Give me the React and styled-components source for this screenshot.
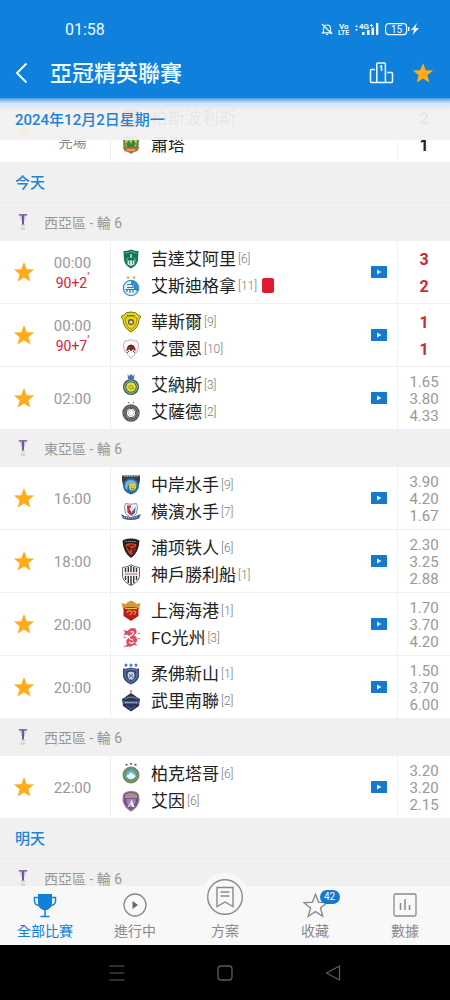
import React from "react";
import styled, { createGlobalStyle, css } from "styled-components";

const BLUE = "#0f80dc";

const GlobalStyle = createGlobalStyle`
  *, *::before, *::after { box-sizing: border-box; }
  body {
    margin: 0;
    background: #f0f0f0;
    font-family: Roboto, "Noto Sans CJK TC", sans-serif;
  }
  button { border: 0; padding: 0; background: none; font: inherit; color: inherit; cursor: pointer; }
  svg { display: block; }
  ul { list-style: none; margin: 0; padding: 0; }
  h1, h2, h3 { margin: 0; font-weight: 500; }
`;

const Screen = styled.div`
  display: flex;
  flex-direction: column;
  height: 100vh;
`;

const Header = styled.header`
  flex: none;
  background: ${BLUE};
  color: #effaff;
`;

const StatusBar = styled.div`
  display: flex;
  align-items: center;
  justify-content: space-between;
  height: 48px;
  padding: 10px 28px 0 65px;
  font-size: 16px;
`;

const StatusIcons = styled.div`
  display: flex;
  align-items: center;
`;

const TitleBar = styled.div`
  display: flex;
  align-items: center;
  height: 50px;
  padding: 0 16px 0 14px;
`;

const Title = styled.h1`
  flex: 1;
  padding: 2px 0 0 21px;
  font-size: 22px;
  line-height: 30px;
`;

const IconButton = styled.button`
  display: flex;
  align-items: center;
  justify-content: center;
`;

const Actions = styled.div`
  display: flex;
  align-items: center;
  gap: 18px;
`;

const Feed = styled.main`
  position: relative;
  flex: 1;
  min-height: 0;
  padding-top: 2px;
  overflow: hidden;
`;

const StickyDate = styled.h2`
  position: absolute;
  inset: 0 0 auto 0;
  z-index: 1;
  height: 42px;
  padding-left: 15px;
  line-height: 44px;
  font-size: 15px;
  color: #1f82d2;
  background:
    linear-gradient(rgba(15, 128, 220, 0.75), rgba(190, 222, 250, 0.7) 5px, rgba(240, 240, 240, 0) 13px),
    rgba(241, 241, 241, 0.95);
`;

const DayTitle = styled.h2`
  height: 41px;
  padding-left: 15px;
  line-height: 42px;
  font-size: 15px;
  color: #1f82d2;
  border-bottom: 1px solid #e9e9e9;
`;

const RoundTitle = styled.h3`
  display: flex;
  align-items: center;
  gap: 14px;
  height: 38px;
  padding-left: 16px;
  font-size: 14px;
  font-weight: 400;
  color: #999;
`;

const MatchRow = styled.li`
  display: grid;
  grid-template-columns: 48px 62px 1fr 53px;
  align-items: stretch;
  min-height: 62px;
`;

const MatchList = styled.ul`
  background: #fff;
  ${MatchRow} + ${MatchRow} {
    min-height: 63px;
    border-top: 1px solid #efefef;
  }
`;

const Kickoff = styled.div`
  display: flex;
  flex-direction: column;
  align-items: center;
  justify-content: center;
  padding: 2px 13px 0 0;
  font-size: 15px;
  line-height: 20px;
  color: #999;
`;

const KickoffTime = styled.span`
  min-height: 20px;
`;

const Phase = styled.span`
  font-size: 14px;
  color: ${(p) => (p.$live ? "#d32340" : "#888")};
  sup { font-size: 12px; line-height: 0; }
`;

const Fixture = styled.div`
  display: flex;
  align-items: center;
  justify-content: space-between;
  padding-right: 10px;
  padding-left: 10px;
  border-left: 1px solid #f0f0f0;
`;

const Team = styled.div`
  display: flex;
  align-items: center;
  height: 27px;
  font-size: 17px;
  line-height: 25px;
  color: #222;
  white-space: nowrap;
`;

const TeamName = styled.span`
  padding: 2px 0 0 10px;
`;

const Rank = styled.small`
  padding: 1px 0 0 2px;
  font-size: 12px;
  font-weight: 300;
  color: #777;
`;

const RedCard = styled.span`
  width: 12px;
  height: 15px;
  margin-left: 5px;
  border-radius: 2px;
  background: #e21a30;
`;

const Result = styled.div`
  display: flex;
  flex-direction: column;
  align-items: center;
  justify-content: center;
  padding-top: 2px;
  border-left: 1px solid #f3f3f3;
  ${(p) =>
    p.$odds
      ? css`
          font-size: 15px;
          line-height: 17px;
          color: #999;
        `
      : css`
          font-size: 16px;
          font-weight: 700;
          line-height: 27px;
          color: ${p.$live ? "#cb2637" : "#222"};
        `}
`;

const TabBar = styled.nav`
  position: relative;
  z-index: 2;
  flex: none;
  display: flex;
  height: 59px;
  background: #f8f8f8;
`;

const Tab = styled.a`
  flex: 1;
  display: flex;
  flex-direction: column;
  align-items: center;
  justify-content: flex-end;
  padding-bottom: 3px;
  font-size: 14px;
  line-height: 21px;
  text-decoration: none;
  color: ${(p) => (p.$active ? BLUE : "#8a8a8a")};
`;

const TabIcon = styled.span`
  position: relative;
  display: flex;
  align-items: center;
  justify-content: center;
  height: 32px;
`;

const RaisedIcon = styled.span`
  flex: none;
  display: flex;
  align-items: center;
  justify-content: center;
  width: 48px;
  height: 48px;
  border-radius: 50%;
  background: #f8f8f8;
`;

const Badge = styled.span`
  position: absolute;
  top: 1px;
  left: 17px;
  width: 20px;
  border-radius: 8px;
  background: #1478cc;
  color: #fff;
  font-size: 10px;
  line-height: 14px;
  text-align: center;
`;

const SystemBar = styled.div`
  flex: none;
  display: flex;
  align-items: center;
  justify-content: center;
  gap: 84px;
  height: 55px;
  background: #000;
  color: #5c5c5c;
`;

function StarIcon({ size = 22, outline }) {
  return (
    <svg width={size} height={size} viewBox="0 0 24 24" aria-hidden="true">
      <path
        d="M12 1.2 15 8.900l8 .4-6.200 5.100 2.100 8L12 17.900 5.100 22.400l2.100-8L1 9.300l8-.4z"
        fill={outline ? "none" : "#ffab1a"}
        stroke={outline ? "currentColor" : "none"}
        strokeWidth="1.3"
      />
    </svg>
  );
}

function PlayIcon() {
  return (
    <svg width="16" height="12" viewBox="0 0 16 12" aria-hidden="true">
      <rect width="16" height="12" rx="0.5" fill="#1679cd" />
      <path d="M6 3.500 10.500 6 6 8.500z" fill="#e8f4ff" />
    </svg>
  );
}

function CupIcon() {
  return (
    <svg width="14" height="20" viewBox="0 0 14 20" aria-hidden="true">
      <path d="M3.500 3 5.200 8.500 7 10l1.800-1.500L10.500 3z" fill="#cfc4dc" />
      <path d="M2.800 2.800h8.400" stroke="#8672a0" strokeWidth="1.600" />
      <path d="M7 3v9.500" stroke="#6f5290" strokeWidth="1.900" />
      <path d="M5 13h4" stroke="#a7a0b0" strokeWidth=".8" />
      <ellipse cx="7" cy="16.500" rx="2.800" ry="1.600" fill="#d6d6d8" />
    </svg>
  );
}

const SHIELD = "M2 3Q6 3 10 1.200 14 3 18 3v8q0 6-8 10Q2 17 2 11z";

const crests = {
  persepolis: <path d={SHIELD} fill="#b92b2b" />,
  sepahan: (
    <>
      <path d="M2 5 5 2h10l3 3-.500 9L10 20l-7.500-6z" fill="#6a8c3c" />
      <path d="M4 5h12l-1 7H5z" fill="#b8d27a" />
      <path d="m5 10 3-4 2 4 2-5 3 5-3 3H7z" fill="#3f7f36" />
      <path d="m1.500 13 4 1h9l4-1-2 4-6.500 2-6.500-2z" fill="#bd6a35" />
      <path d="M6 16h8" stroke="#f4e2a0" />
    </>
  ),
  ahli: (
    <>
      <path d="M2.500 3q4 0 7.500-1.500Q13.500 3 17.500 3L17 12q-.500 5-7 8.500-6.500-3.500-7-8.500z" fill="#147457" />
      <path d="M4 5q3 0 6-1.500M16 5q-3 0-6-1.500" stroke="#5fae91" fill="none" />
      <path d="M9 6h2v4H9z" fill="#8fc9b3" />
      <path d="M5.500 13q0-3 2-3.500M14.500 13q0-3-2-3.500" stroke="#6fb79d" fill="none" />
      <path d="M6.500 12.500h7v4L10 18l-3.500-1.500z" fill="#dcf1e9" />
      <path d="M8.500 12.500v4M11.500 12.500v4" stroke="#147457" strokeWidth=".8" />
    </>
  ),
  esteghlal: (
    <>
      <path d="m7 .5.600 1.200 1.400.1-1 1 .2 1.200-1.200-.6-1.200.6.2-1.200-1-1 1.400-.1zM13 .5l.6 1.200 1.400.1-1 1 .2 1.200-1.200-.6-1.200.6.2-1.200-1-1 1.400-.1z" fill="#d9b65b" />
      <circle cx="10" cy="13" r="7.600" fill="#e5f3fb" stroke="#3c8fc4" strokeWidth="1.300" />
      <path d="M10 5.400a7.600 7.600 0 0 1 6.600 11.400L13 14V9h-3z" fill="#2b8fd0" />
      <path d="M6 9.500h6v3H6M4.500 14.500h11M6 17v-2M9 18v-3M12 17.500v-3" stroke="#3178b4" strokeWidth="1.200" fill="none" />
    </>
  ),
  wasl: (
    <>
      <path d="M0 5.500 3 4q1.500-3 7-3t7 3l3 1.500-2 3q0 8-8 12.500Q2 16.500 2 8.500z" fill="#e7d51e" stroke="#77700f" strokeWidth="1" />
      <path d="M4 7q6-4 12 0l-1 6q-2 4-5 5.500Q7 17 5 13z" fill="none" stroke="#857f18" strokeWidth=".8" />
      <circle cx="10" cy="11" r="3" fill="#5c5a34" />
      <path d="M8.500 10.500q1.500-2 3 0v2h-3z" fill="#e4e4d4" />
      <path d="M6 4.500h8" stroke="#4a470c" strokeDasharray="1 .6" />
    </>
  ),
  rayyan: (
    <>
      <path d="M4 3q3 .5 6-1.500Q13 3.500 16 3l1.500 4Q18 14 10 20 2 14 2.500 7z" fill="#fcfaf8" stroke="#b9aaa5" strokeWidth=".9" />
      <path d="M5.500 13.500q-.5-6 4.500-7 5 1 4.500 7L12 11.500H8z" fill="#a2262d" />
      <path d="M7 8.500q3-2 6 0" stroke="#302423" fill="none" />
      <circle cx="10" cy="11.500" r="1.400" fill="#40312c" />
      <path d="m6 15 2-2M14 15l-2-2" stroke="#60302c" />
    </>
  ),
  nassr: (
    <>
      <path d="m6.500 0 1.500 2L10 0l2 2 1.500-2-.5 5H7z" fill="#4b74b8" />
      <circle cx="10" cy="13" r="8" fill="#256173" />
      <circle cx="10" cy="13" r="6.200" fill="#2a5a58" stroke="#c9c851" strokeWidth="1" />
      <circle cx="10" cy="13" r="4.800" fill="#e3da35" />
      <path d="M7.500 13.500q1-3 3-1.500t2 2q-2 1.500-4 .5" stroke="#7f8f2d" fill="none" />
    </>
  ),
  sadd: (
    <>
      <circle cx="7.500" cy="1.600" r=".8" fill="#777" />
      <circle cx="12.500" cy="1.600" r=".8" fill="#777" />
      <circle cx="10" cy="12" r="7" fill="none" stroke="#555" strokeWidth="3.400" />
      <circle cx="10" cy="12" r="7" fill="none" stroke="#aaa" strokeWidth=".8" strokeDasharray="1.500 1" />
      <circle cx="10" cy="12" r="4.700" fill="#f5f5f5" stroke="#444" />
      <path d="m8 10 2-1.500 2 1.500.5 3-2.500 2-2.500-2z" fill="#fff" stroke="#aaa" strokeWidth=".6" />
    </>
  ),
  mariners: (
    <>
      <path d="M1 1.500h18v5L17.500 13Q16 18 10 20.500 4 18 2.500 13L1 6.500z" fill="#364047" />
      <path d="M3 2.500h14" stroke="#95a0a4" strokeDasharray="1.500 1" />
      <circle cx="10" cy="12" r="7.800" fill="#2a6cab" />
      <path d="M4 14Q3 6 10 6q6 .5 5.500 6-1 5-6 4.500 3-1 2-3.500T8.500 11Q6 11 6.500 16z" fill="#7fb3cf" />
      <path d="M8 13q0-3.500 3.500-3.500t3.500 3.500q-.5 3-3.500 3.500T8 13z" fill="#e6d334" />
      <path d="M10 12.500h1M12.500 12.500h1M10 14.500q1.500 1 3 0" stroke="#4b5a2c" strokeWidth=".8" fill="none" />
    </>
  ),
  marinos: (
    <>
      <path d="M4.500 2.500q5.500 1.500 11 0l1 3-1 7-5.500 5-5.500-5-1-7z" fill="#f3f1f1" stroke="#8a929c" />
      <path d="M6 4.500h4v10l-3.500-3z" fill="#b93440" />
      <path d="m10 12 4.500-6-.5 6-4 3z" fill="#3e69a3" />
      <circle cx="10.500" cy="8" r="2" fill="#e8dde0" />
      <path d="M0 13q5 3.500 10 3t10-3l-2 4.500q-8 3-16 0z" fill="#445b8b" />
      <path d="M3 16q7 2 14 0" stroke="#c9d2e4" strokeDasharray="1.200 .8" fill="none" />
    </>
  ),
  pohang: (
    <>
      <path d="M1.500 3.500Q6 1 10 1.500q4-.5 8.500 2-.5 12-8.500 17.500Q2 15.500 1.500 3.500z" fill="#26211f" />
      <path d="M4.500 7.500q5-2.500 11 0-1 7-5.500 11-4.500-4-5.500-11z" fill="#d94328" />
      <path d="M13 8.500q-5-1-5 1t3 2.500 0 3.500M6 9l3 5M14.500 10l-3 2.500" stroke="#26211f" strokeWidth="1.200" fill="none" />
      <path d="M4.500 4.500h11" stroke="#9c8f88" strokeDasharray="1.500 .7" />
    </>
  ),
  vissel: (
    <>
      <path d="M1.500 3.500Q7 3 10 .8q3 2.200 8.500 2.700v9Q17.500 18 10 21.500 2.500 18 1.500 12.500z" fill="#fafafa" stroke="#555" strokeWidth=".9" />
      <path d="M4.500 4v12M7.300 3v16M10 2v19M12.700 3v16M15.500 4v12" stroke="#333" strokeWidth="1.400" />
      <path d="M2 8h16v4H2z" fill="#efe9eb" />
      <path d="M4 10h12" stroke="#b0808a" strokeWidth="1.400" strokeDasharray="1.500 .6" />
    </>
  ),
  shanghai: (
    <>
      <path d="m.5 3 4 1L7 2l3-1.500L13 2l2.500 2 4-1-1.500 6H2z" fill="#d39a33" />
      <path d="M2.500 8q7-2 15 0v8L10 21l-7.500-5z" fill="#b51f22" />
      <path d="M4 8.500h12" stroke="#f0c54c" />
      <path d="M6 13q1-3.500 3.500-2t1 2.500L8.500 15M12 11l2.500.5-1 3.500" stroke="#f07d36" strokeWidth="1.500" fill="none" />
    </>
  ),
  gwangju: (
    <>
      <path d="M9 1.500q6-1.500 6.500 2.500.5 3-3 4 3 1 3.500 4t-2 4l2.500 2.500-4-.5q-2.500 2.500-5 1.500l-3 .5 1.500-3q-2-2.500.5-5l2.500-2.500-3-2-3.500 1 1.500-3-1.500-2.500L6.500 4z" fill="#dc4d63" />
      <path d="M9.500 5q3.500-1 3 1t-4 3.500q-1 3 3.500 3.500M8 15q2.500 2.500 5 0" stroke="#fff0f1" strokeWidth="1.300" fill="none" />
      <path d="m2 10 3.500 1M16.500 7 19 6M16.500 11l2.500 1M3 20l2.500-1.500" stroke="#e07f8e" strokeWidth="1.200" />
    </>
  ),
  johor: (
    <>
      <path d="m5 0 .7 1.400 1.300.1-1 1 .3 1.300L5 3.200l-1.300.6L4 2.500l-1-1 1.300-.1zm5 0 .7 1.400 1.300.1-1 1 .3 1.300-1.300-.6-1.300.6L9 2.500l-1-1 1.300-.1zm5 0 .7 1.400 1.300.1-1 1 .3 1.300-1.300-.6-1.300.6L14 2.500l-1-1 1.300-.1z" fill="#4460a4" />
      <path d="M2 5.500q4 .5 8-1 4 1.500 8 1v8q-1 5-8 8-7-3-8-8z" fill="#344678" />
      <path d="M4 7q3 .5 6-1 3 1.500 6 1v6q-1 4-6 6.500Q5 17 4 13z" fill="none" stroke="#8496c0" strokeWidth=".8" />
      <path d="m7 9.500 3-1 3 1 .5 3-1.500 4h-4l-1.500-4z" fill="#c9d4e7" />
      <path d="m8 11 1.500 1L8.500 15M12 11l-1.500 1 1 3" stroke="#33467a" strokeWidth=".8" fill="none" />
    </>
  ),
  buriram: (
    <>
      <path d="M10 0v5" stroke="#bd8b4c" strokeWidth="1.500" />
      <path d="M7 5q3-3 6 0l4 3 2 1-1 7-8 5.500L2 16 1 9l2-1z" fill="#273458" />
      <path d="M4 9q6-4 12 0" stroke="#7b8fc0" fill="none" />
      <path d="M2 11h16v3H2z" fill="#4a5c8e" />
      <path d="M4 12.500h12" stroke="#a3b0d0" strokeDasharray="1.500 .7" />
      <path d="m6 16 4 3 4-3" stroke="#5a6c9e" fill="none" />
    </>
  ),
  pakhtakor: (
    <>
      <path d="m4.500 1.500 2 .5M9 .8h2M13.500 2l2-.5" stroke="#4d5961" strokeWidth="1.600" />
      <circle cx="10" cy="12" r="8" fill="#4a8a83" stroke="#967f3c" strokeWidth="1" />
      <circle cx="10" cy="12" r="6.300" fill="none" stroke="#bcae61" strokeWidth="1" strokeDasharray="1.500 1" />
      <circle cx="10" cy="12" r="5" fill="#58b7dc" />
      <path d="M5.500 13.500q.5-2.500 2.500-2 .5-2 2-2t2 2q2-.5 2.500 2-1.500 2.500-4.500 2.500t-4.500-2.500z" fill="#f5f8f2" />
    </>
  ),
  ain: (
    <>
      <path d="M2.500 5Q4 1.500 10 1.500T17.500 5l.5 5Q17 17 10 21 3 17 2 10z" fill="#775099" stroke="#9b8073" strokeWidth="1.200" />
      <path d="M4 5q6-4 12 0v3H4z" fill="#a9937f" />
      <path d="M5.500 9h9v3l-2 5H8l-2.500-5z" fill="#a184b5" />
      <path d="M10.500 9.500 13.500 17h-2.500l-1-3-2.500 3H6.500l3-4z" fill="#f6eff6" />
    </>
  ),
};

function Crest({ name }) {
  return (
    <svg width="20" height="22" viewBox="0 0 20 22" aria-hidden="true">
      {crests[name]}
    </svg>
  );
}

function Match({ match }) {
  const { time, minute, phase, teams, score, odds } = match;
  return (
    <MatchRow>
      <IconButton aria-label="收藏">
        <StarIcon />
      </IconButton>
      <Kickoff>
        <KickoffTime>{time}</KickoffTime>
        {minute && (
          <Phase $live>
            {minute}
            <sup>'</sup>
          </Phase>
        )}
        {phase && <Phase>{phase}</Phase>}
      </Kickoff>
      <Fixture>
        <div>
          {teams.map(([crest, name, rank, red]) => (
            <Team key={name}>
              <Crest name={crest} />
              <TeamName>{name}</TeamName>
              {rank && <Rank>[{rank}]</Rank>}
              {red && <RedCard />}
            </Team>
          ))}
        </div>
        {!phase && (
          <IconButton aria-label="直播">
            <PlayIcon />
          </IconButton>
        )}
      </Fixture>
      <Result $odds={!!odds} $live={!!minute}>
        {(odds || score).map((value, i) => (
          <span key={i}>{value}</span>
        ))}
      </Result>
    </MatchRow>
  );
}

function Round({ name, matches = [] }) {
  return (
    <section>
      <RoundTitle>
        <CupIcon />
        {name}
      </RoundTitle>
      <MatchList>
        {matches.map((m) => (
          <Match key={m.teams[0][1]} match={m} />
        ))}
      </MatchList>
    </section>
  );
}

const finished = {
  phase: "完場",
  teams: [["persepolis", "柏斯波利斯"], ["sepahan", "肅塔"]],
  score: [2, 1],
};

const rounds = [
  {
    name: "西亞區 - 輪 6",
    matches: [
      { time: "00:00", minute: "90+2", teams: [["ahli", "吉達艾阿里", 6], ["esteghlal", "艾斯迪格拿", 11, true]], score: [3, 2] },
      { time: "00:00", minute: "90+7", teams: [["wasl", "華斯爾", 9], ["rayyan", "艾雷恩", 10]], score: [1, 1] },
      { time: "02:00", teams: [["nassr", "艾納斯", 3], ["sadd", "艾薩德", 2]], odds: ["1.65", "3.80", "4.33"] },
    ],
  },
  {
    name: "東亞區 - 輪 6",
    matches: [
      { time: "16:00", teams: [["mariners", "中岸水手", 9], ["marinos", "橫濱水手", 7]], odds: ["3.90", "4.20", "1.67"] },
      { time: "18:00", teams: [["pohang", "浦项铁人", 6], ["vissel", "神戶勝利船", 1]], odds: ["2.30", "3.25", "2.88"] },
      { time: "20:00", teams: [["shanghai", "上海海港", 1], ["gwangju", "FC光州", 3]], odds: ["1.70", "3.70", "4.20"] },
      { time: "20:00", teams: [["johor", "柔佛新山", 1], ["buriram", "武里南聯", 2]], odds: ["1.50", "3.70", "6.00"] },
    ],
  },
  {
    name: "西亞區 - 輪 6",
    matches: [
      { time: "22:00", teams: [["pakhtakor", "柏克塔哥", 6], ["ain", "艾因", 6]], odds: ["3.20", "3.20", "2.15"] },
    ],
  },
];

function StatusGlyphs() {
  return (
    <svg width="102" height="16" viewBox="0 0 102 16" fill="none" stroke="currentColor" aria-label="15%">
      <path d="M3.500 10.500V7.500a3.500 3.500 0 0 1 7 0v3l1 1.300H2.500zM6 13.500h2M2 3l10 10" strokeWidth="1.200" />
      <g fill="currentColor" stroke="none" fontFamily="Roboto, sans-serif" fontWeight="700">
        <text x="19" y="7.500" fontSize="8">Vo</text>
        <text x="18" y="14" fontSize="7">LTE</text>
        <text x="39" y="7.500" fontSize="8">4G</text>
        <path d="m35 6 1.500-2L38 6zM35 8h3l-1.500 2zM50 4h3v1h-3zM51 3h1v3h-1zM42 11h2.500v3H42zM47 9h2.500v5H47zM51.500 6.500H54V14h-2.500zM56 2h2.300v12H56z" />
        <text x="76.500" y="11.800" fontSize="10" fontWeight="400" textAnchor="middle">15</text>
        <path d="M88 6h1.500v4H88zM97 2l-6 7h3l-1.500 5 6.500-7h-3.500z" />
      </g>
      <rect x="65.600" y="2.600" width="21" height="11" rx="3" strokeWidth="1.200" />
    </svg>
  );
}

export default function App() {
  return (
    <Screen>
      <GlobalStyle />
      <Header>
        <StatusBar>
          <span>01:58</span>
          <StatusIcons>
            <StatusGlyphs />
          </StatusIcons>
        </StatusBar>
        <TitleBar>
          <IconButton aria-label="返回">
            <svg width="15" height="22" viewBox="0 0 15 22" fill="none" stroke="currentColor" strokeWidth="2">
              <path d="M12.500 1.500 3 11l9.500 9.500" />
            </svg>
          </IconButton>
          <Title>亞冠精英聯賽</Title>
          <Actions>
            <IconButton aria-label="積分榜">
              <svg width="26" height="24" viewBox="0 0 26 24" fill="none" stroke="currentColor" strokeWidth="1.500">
                <path d="M8.800 21.500V3q0-1 1-1h6.600q1 0 1 1v18.500M7 8.500H3.500q-1 0-1 1v11q0 1 1 1h20q1 0 1-1v-8q0-1-1-1H19M12 5.700l1.500-.7v5" />
              </svg>
            </IconButton>
            <IconButton aria-label="收藏聯賽">
              <StarIcon />
            </IconButton>
          </Actions>
        </TitleBar>
      </Header>

      <Feed>
        <StickyDate>2024年12月2日星期一</StickyDate>
        <MatchList>
          <Match match={finished} />
        </MatchList>
        <DayTitle>今天</DayTitle>
        {rounds.map((r, i) => (
          <Round key={i} {...r} />
        ))}
        <DayTitle>明天</DayTitle>
        <Round name="西亞區 - 輪 6" />
      </Feed>

      <TabBar>
        <Tab href="#all" $active>
          <TabIcon>
            <svg width="26" height="26" viewBox="0 0 26 26">
              <path d="M6 2h14v9q0 5-5 7H11q-5-2-5-7z" fill="currentColor" />
              <path d="M6 5.500H2.500v4Q3 13 7 13.500M20 5.500h3.500v4q-.5 3.500-4.500 4M13 18v6M8.500 24.500h9" fill="none" stroke="currentColor" strokeWidth="1.500" />
            </svg>
          </TabIcon>
          全部比賽
        </Tab>
        <Tab href="#live">
          <TabIcon>
            <svg width="26" height="26" viewBox="0 0 26 26">
              <circle cx="13" cy="13" r="11" fill="none" stroke="currentColor" strokeWidth="1.300" />
              <path d="M10.500 9 16 13l-5.500 4z" fill="#666" />
            </svg>
          </TabIcon>
          進行中
        </Tab>
        <Tab href="#plans">
          <RaisedIcon>
            <svg width="38" height="38" viewBox="0 0 38 38" fill="none" stroke="currentColor" strokeWidth="1.400">
              <circle cx="19" cy="19" r="17.300" />
              <path d="M11 9.500h16v19L19 24l-8 4.500zM14.500 14h9M14.500 18h9" />
            </svg>
          </RaisedIcon>
          方案
        </Tab>
        <Tab href="#favourites">
          <TabIcon>
            <StarIcon outline size={25} />
            <Badge>42</Badge>
          </TabIcon>
          收藏
        </Tab>
        <Tab href="#stats">
          <TabIcon>
            <svg width="26" height="26" viewBox="0 0 26 26" fill="none" stroke="currentColor" strokeWidth="1.300">
              <rect x="2" y="2" width="22" height="22" rx="1.500" />
              <path d="M8.500 11v7M13 7v11M17.500 13v5" strokeWidth="1.500" />
            </svg>
          </TabIcon>
          數據
        </Tab>
      </TabBar>

      <SystemBar>
        <IconButton aria-label="選單">
          <svg width="24" height="20" viewBox="0 0 24 20" fill="none" stroke="currentColor" strokeWidth="1.200">
            <path d="M4.500 3h15M4.500 10h15M4.500 17h15" />
          </svg>
        </IconButton>
        <IconButton aria-label="主畫面">
          <svg width="24" height="20" viewBox="0 0 24 20" fill="none" stroke="currentColor" strokeWidth="1.300">
            <rect x="5" y="3" width="14" height="14" rx="3" />
          </svg>
        </IconButton>
        <IconButton aria-label="上一頁">
          <svg width="24" height="20" viewBox="0 0 24 20" fill="none" stroke="currentColor" strokeWidth="1.300" strokeLinejoin="round">
            <path d="M5.500 10 18.500 3v14z" />
          </svg>
        </IconButton>
      </SystemBar>
    </Screen>
  );
}
